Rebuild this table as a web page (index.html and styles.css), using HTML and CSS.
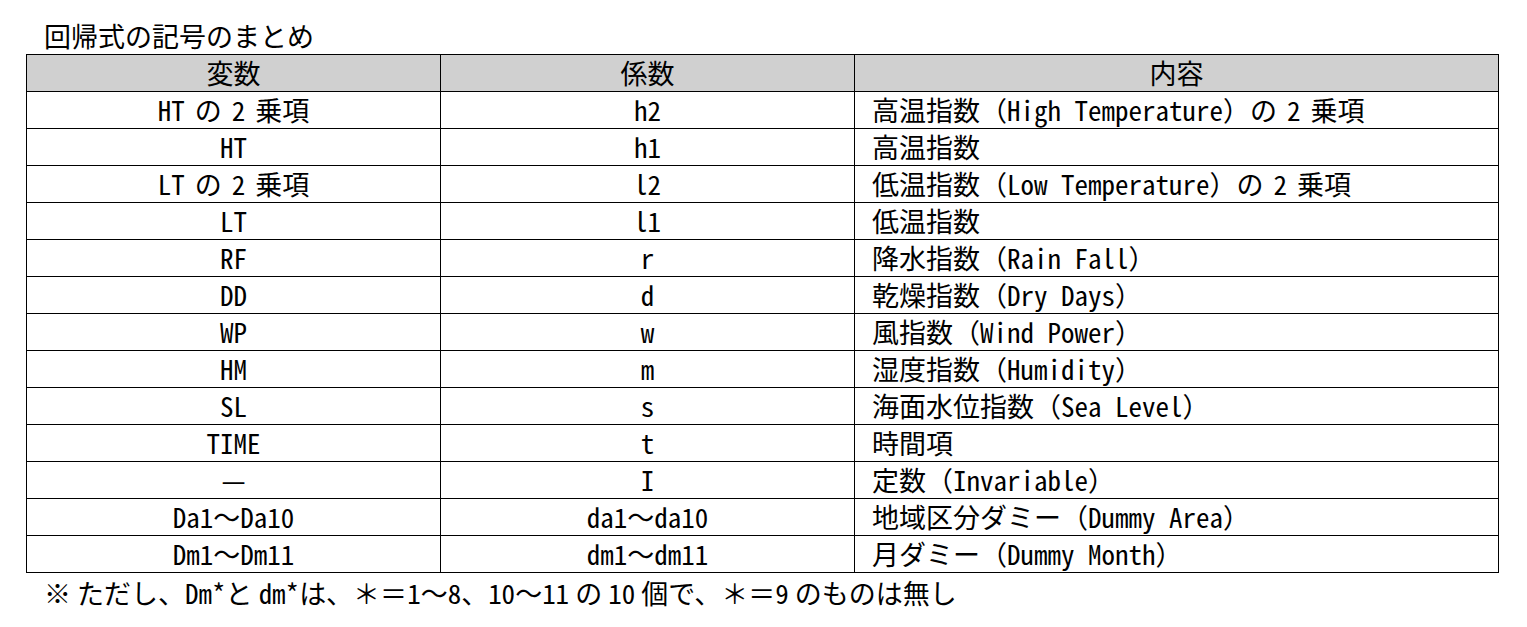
FILE: index.html
```html
<!DOCTYPE html>
<html lang="ja">
<head>
<meta charset="utf-8">
<title>回帰式の記号のまとめ</title>
<link rel="stylesheet" href="styles.css">
</head>
<body>
<div class="page">
  <div class="title">回帰式の記号のまとめ</div>
  <table class="summary">
    <colgroup>
      <col class="c-var">
      <col class="c-coef">
      <col class="c-desc">
    </colgroup>
    <thead>
      <tr><th>変数</th><th>係数</th><th>内容</th></tr>
    </thead>
    <tbody>
      <tr><td><span class="en">HT</span> の <span class="en">2</span> 乗項</td><td class="en">h2</td><td class="desc">高温指数（<span class="en">High Temperature</span>）の <span class="en">2</span> 乗項</td></tr>
      <tr><td class="en">HT</td><td class="en">h1</td><td class="desc">高温指数</td></tr>
      <tr><td><span class="en">LT</span> の <span class="en">2</span> 乗項</td><td class="en">l2</td><td class="desc">低温指数（<span class="en">Low Temperature</span>）の <span class="en">2</span> 乗項</td></tr>
      <tr><td class="en">LT</td><td class="en">l1</td><td class="desc">低温指数</td></tr>
      <tr><td class="en">RF</td><td class="en">r</td><td class="desc">降水指数（<span class="en">Rain Fall</span>）</td></tr>
      <tr><td class="en">DD</td><td class="en">d</td><td class="desc">乾燥指数（<span class="en">Dry Days</span>）</td></tr>
      <tr><td class="en">WP</td><td class="en">w</td><td class="desc">風指数（<span class="en">Wind Power</span>）</td></tr>
      <tr><td class="en">HM</td><td class="en">m</td><td class="desc">湿度指数（<span class="en">Humidity</span>）</td></tr>
      <tr><td class="en">SL</td><td class="en">s</td><td class="desc">海面水位指数（<span class="en">Sea Level</span>）</td></tr>
      <tr><td class="en">TIME</td><td class="en">t</td><td class="desc">時間項</td></tr>
      <tr><td>—</td><td class="en">I</td><td class="desc">定数（<span class="en">Invariable</span>）</td></tr>
      <tr><td><span class="en">Da1</span>～<span class="en">Da10</span></td><td><span class="en">da1</span>～<span class="en">da10</span></td><td class="desc">地域区分ダミー（<span class="en">Dummy Area</span>）</td></tr>
      <tr><td><span class="en">Dm1</span>～<span class="en">Dm11</span></td><td><span class="en">dm1</span>～<span class="en">dm11</span></td><td class="desc">月ダミー（<span class="en">Dummy Month</span>）</td></tr>
    </tbody>
  </table>
  <div class="note">※ ただし、<span class="en">Dm*</span>と <span class="en">dm*</span>は、＊＝<span class="en">1</span>～<span class="en">8</span>、<span class="en">10</span>～<span class="en">11</span> の <span class="en">10</span> 個で、＊＝<span class="en">9</span> のものは無し</div>
</div>
</body>
</html>
```

FILE: styles.css
```css
html, body {
  margin: 0;
  padding: 0;
  background: #ffffff;
}

body {
  font-family: "Noto Sans CJK JP", "Noto Sans", sans-serif;
  font-size: 27px;
  color: #000000;
  word-spacing: 4px;
}

.en {
  font-feature-settings: "hwid" 1;
  word-spacing: 0;
}

.page {
  padding-left: 26px;
}

.title {
  margin-top: 21px;
  padding-left: 18px;
  height: 30px;
  line-height: 30px;
}

.summary {
  margin-top: 3px;
  border-collapse: collapse;
  table-layout: fixed;
  width: 1472px;
}

.c-var { width: 414px; }
.c-coef { width: 414px; }
.c-desc { width: 644px; }

.summary th,
.summary td {
  border: 1px solid #000000;
  height: 36px;
  padding: 0;
  line-height: 30px;
  text-align: center;
  vertical-align: middle;
  font-weight: normal;
  white-space: nowrap;
}

.summary th {
  background: #d0d0d0;
}

.summary td.desc {
  text-align: left;
  padding-left: 17px;
}

.note {
  margin-top: 5px;
  padding-left: 18px;
  height: 30px;
  line-height: 30px;
  word-spacing: 0;
}
```
